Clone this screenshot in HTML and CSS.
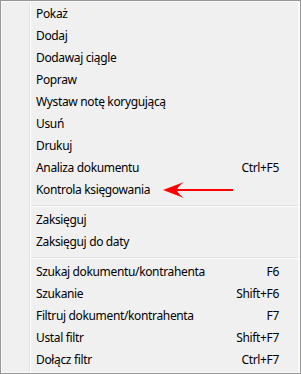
FILE: index.html
```html
<!DOCTYPE html>
<html lang="pl">
<head>
<meta charset="utf-8">
<link rel="stylesheet" href="styles.css">
</head>
<body>
<div class="menu">
  <ul class="group">
    <li class="item"><span class="label">Pokaż</span></li>
    <li class="item"><span class="label">Dodaj</span></li>
    <li class="item"><span class="label">Dodawaj ciągle</span></li>
    <li class="item"><span class="label">Popraw</span></li>
    <li class="item"><span class="label">Wystaw notę korygującą</span></li>
    <li class="item"><span class="label">Usuń</span></li>
    <li class="item"><span class="label">Drukuj</span></li>
    <li class="item"><span class="label">Analiza dokumentu</span><span class="key">Ctrl+F5</span></li>
    <li class="item"><span class="label">Kontrola księgowania</span></li>
  </ul>
  <div class="sep"></div>
  <ul class="group">
    <li class="item"><span class="label">Zaksięguj</span></li>
    <li class="item"><span class="label">Zaksięguj do daty</span></li>
  </ul>
  <div class="sep"></div>
  <ul class="group">
    <li class="item"><span class="label">Szukaj dokumentu/kontrahenta</span><span class="key">F6</span></li>
    <li class="item"><span class="label">Szukanie</span><span class="key">Shift+F6</span></li>
    <li class="item"><span class="label">Filtruj dokument/kontrahenta</span><span class="key">F7</span></li>
    <li class="item"><span class="label">Ustal filtr</span><span class="key">Shift+F7</span></li>
    <li class="item"><span class="label">Dołącz filtr</span><span class="key">Ctrl+F7</span></li>
  </ul>
  <svg class="arrow" width="72" height="18" viewBox="0 0 72 18">
    <line x1="14" y1="9" x2="70" y2="9" stroke="#ff0000" stroke-width="2"/>
    <path d="M0 9 L21 1 Q15 5 14 9 Q15 13 21 17 Z" fill="#ff0000"/>
  </svg>
</div>
</body>
</html>
```
FILE: styles.css
```css
html, body {
  margin: 0;
  padding: 0;
  background: #f0f0f0;
}

.menu {
  position: relative;
  box-sizing: border-box;
  width: 301px;
  height: 374px;
  border: 1px solid #979797;
  padding: 2px;
  background-color: #f0f0f0;
  background-image: linear-gradient(to right, transparent 28px, #e2e3e3 28px, #e2e3e3 29px, #ffffff 29px, #ffffff 30px, transparent 30px);
  box-shadow: inset 1px 1px 0 #fafafa, inset -2px -1px 0 #fafafa;
  font-family: "Noto Sans", "Open Sans", sans-serif;
  font-size: 12px;
  letter-spacing: -0.35px;
  color: #000;
}

.group {
  list-style: none;
  margin: 0;
  padding: 0;
}

.item {
  display: flex;
  align-items: center;
  justify-content: space-between;
  height: 22px;
  padding: 0 19px 1px 33px;
  box-sizing: border-box;
}

.sep {
  height: 8px;
  margin-left: 28px;
  padding-top: 4px;
  box-sizing: border-box;
}

.sep::before {
  content: "";
  display: block;
  height: 1px;
  background: #e0e0e0;
  border-bottom: 1px solid #ffffff;
}

.arrow {
  position: absolute;
  left: 162px;
  top: 180px;
}
```
